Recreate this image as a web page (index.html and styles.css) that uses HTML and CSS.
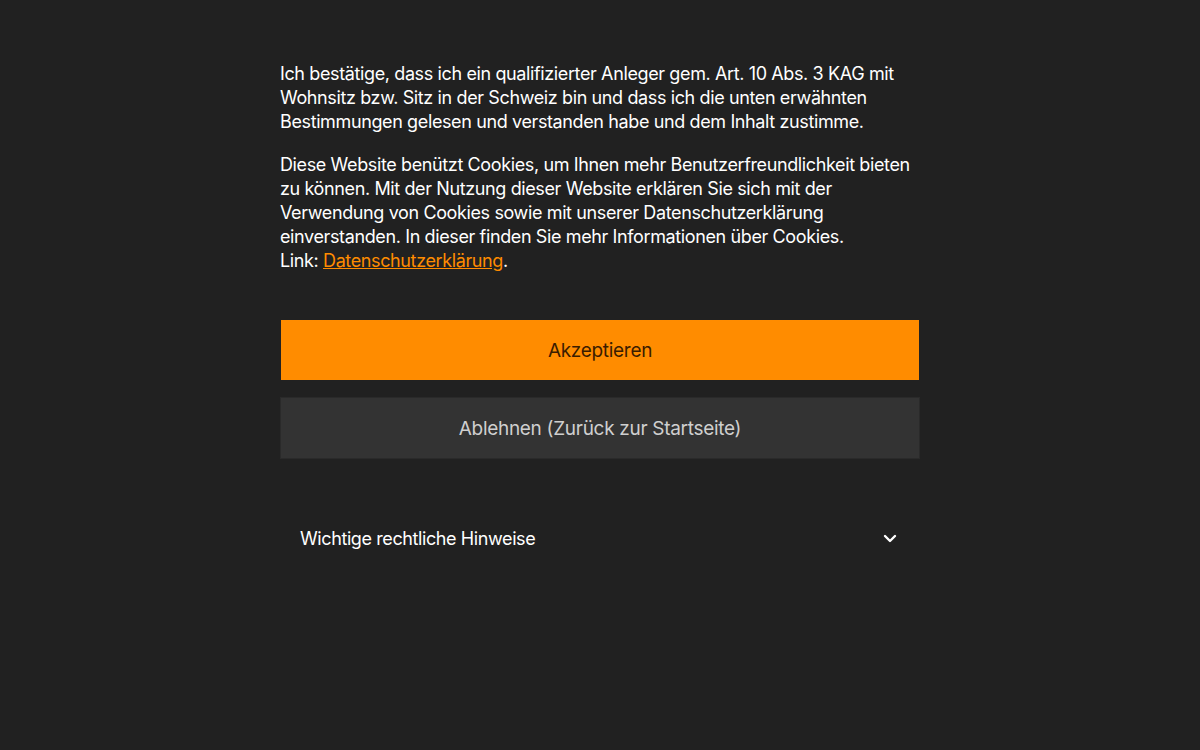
FILE: index.html
```html
<!DOCTYPE html>
<html lang="de">
<head>
<meta charset="utf-8">
<title>Disclaimer</title>
<link rel="stylesheet" href="styles.css">
</head>
<body>
<main class="panel">
  <p class="text">Ich bestätige, dass ich ein qualifizierter Anleger gem. Art. 10 Abs. 3 KAG mit Wohnsitz bzw. Sitz in der Schweiz bin und dass ich die unten erwähnten Bestimmungen gelesen und verstanden habe und dem Inhalt zustimme.</p>
  <p class="text">Diese Website benützt Cookies, um Ihnen mehr Benutzerfreundlichkeit bieten zu können. Mit der Nutzung dieser Website erklären Sie sich mit der Verwendung von Cookies sowie mit unserer Datenschutzerklärung einverstanden. In dieser finden Sie mehr Informationen über Cookies.<br>Link: <a class="link" href="#">Datenschutzerklärung</a>.</p>
  <div class="actions">
    <button class="btn btn-accept" type="button">Akzeptieren</button>
    <button class="btn btn-decline" type="button">Ablehnen (Zurück zur Startseite)</button>
  </div>
  <div class="accordion">
    <span class="acc-title">Wichtige rechtliche Hinweise</span>
    <svg class="chev" width="14" height="10" viewBox="0 0 14 10"><path d="M2 3 L7 8 L12 3" fill="none" stroke="#fff" stroke-width="2.4" stroke-linecap="round" stroke-linejoin="round"/></svg>
  </div>
</main>
</body>
</html>
```
FILE: styles.css
```css
html, body {
  margin: 0;
  padding: 0;
  background: #212121;
  height: 100%;
}
body {
  font-family: Inter, "Noto Sans", sans-serif;
  color: #fff;
}
.panel {
  width: 640px;
  margin: 0 auto;
  padding-top: 62px;
}
.text {
  margin: 0 0 19px;
  font-size: 18px;
  line-height: 24px;
  letter-spacing: -0.38px;
}
.text:last-of-type {
  margin-bottom: 0;
}
.link {
  color: #ff8c00;
  text-decoration: underline;
}
.actions {
  margin-top: 46px;
  display: flex;
  flex-direction: column;
  gap: 16px;
}
.btn {
  height: 62px;
  border: 1px solid #212121;
  font-family: inherit;
  font-size: 19px;
  letter-spacing: -0.3px;
  width: 100%;
  padding: 0;
}
.btn-accept {
  background: #ff8c00;
  color: #3a1c00;
}
.btn-decline {
  background: #333333;
  border-color: #2a2a2a;
  color: #cfcfcf;
}
.accordion {
  margin-top: 59px;
  padding: 0 23px 0 20px;
  height: 40px;
  display: flex;
  align-items: center;
  justify-content: space-between;
}
.acc-title {
  font-size: 18px;
  letter-spacing: -0.4px;
}
.chev {
  display: block;
}
```
